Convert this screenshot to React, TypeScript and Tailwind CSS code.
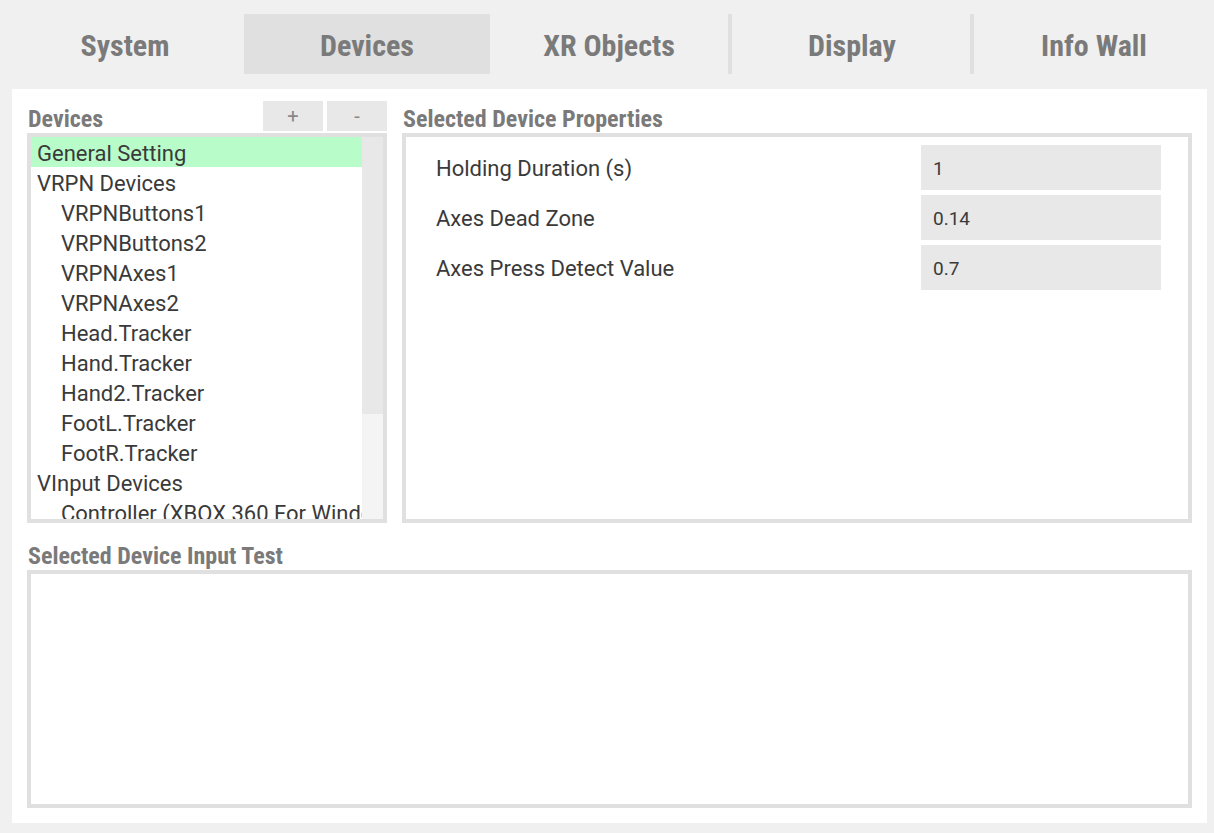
import React from "react";

const tabs = ["System", "Devices", "XR Objects", "Display", "Info Wall"];
const active = 1;

const items: { label: string; indent: boolean; selected?: boolean }[] = [
  { label: "General Setting", indent: false, selected: true },
  { label: "VRPN Devices", indent: false },
  { label: "VRPNButtons1", indent: true },
  { label: "VRPNButtons2", indent: true },
  { label: "VRPNAxes1", indent: true },
  { label: "VRPNAxes2", indent: true },
  { label: "Head.Tracker", indent: true },
  { label: "Hand.Tracker", indent: true },
  { label: "Hand2.Tracker", indent: true },
  { label: "FootL.Tracker", indent: true },
  { label: "FootR.Tracker", indent: true },
  { label: "VInput Devices", indent: false },
  { label: "Controller (XBOX 360 For Windows)", indent: true },
];

const props = [
  { label: "Holding Duration (s)", value: "1" },
  { label: "Axes Dead Zone", value: "0.14" },
  { label: "Axes Press Detect Value", value: "0.7" },
];

const narrow = "font-['Liberation_Sans_Narrow','Roboto_Condensed','Liberation_Sans',sans-serif]";

export default function App() {
  return (
    <div className="w-[1214px] h-[833px] bg-[#f0f0f0] font-['Roboto',sans-serif] overflow-hidden">
      {/* Tab bar */}
      <div className="pt-[14px] pl-[4px] grid grid-cols-5 h-[74px]">
        {tabs.map((t, i) => {
          const isActive = i === active;
          const sep = i > active + 1;
          return (
            <div
              key={t}
              className={
                "h-[60px] pt-[2px] flex items-center justify-center text-[30px] font-bold text-[#7a7a7a] " +
                narrow +
                " " +
                (isActive ? "bg-[#e0e0e0] mx-[-2px]" : "") +
                (sep ? " border-l-4 border-[#e0e0e0] ml-[-2px]" : "")
              }
            >
              {t}
            </div>
          );
        })}
      </div>

      {/* Panel */}
      <div className="mt-[15px] ml-[12px] w-[1195px] h-[734px] bg-white px-[15px] pt-[12px] pb-[15px] flex flex-col">
        <div className="flex gap-[15px]">
          {/* Left column */}
          <div className="w-[360px] flex flex-col">
            <div className="h-[30px] flex items-end justify-between">
              <div className={"text-[24px] leading-[24px] font-bold text-[#7a7a7a] pl-[1px] " + narrow}>Devices</div>
              <div className="flex gap-[4px] self-stretch">
                <div className="w-[60px] h-[30px] bg-[#e8e8e8] flex items-center justify-center text-[20px] text-[#888]">+</div>
                <div className="w-[60px] h-[30px] bg-[#e8e8e8] flex items-center justify-center text-[20px] text-[#888]">-</div>
              </div>
            </div>
            <div className="mt-[2px] h-[390px] border-4 border-[#e0e0e0] flex overflow-hidden">
              <div className="flex-1 overflow-hidden">
                {items.map((it) => (
                  <div
                    key={it.label}
                    className={
                      "h-[30px] pt-[3px] leading-[27px] text-[22px] text-[#3a3a3a] whitespace-nowrap overflow-hidden " +
                      (it.indent ? "pl-[30px] " : "pl-[6px] ") +
                      (it.selected ? "bg-[#b8fcc9]" : "")
                    }
                  >
                    {it.label}
                  </div>
                ))}
              </div>
              <div className="w-[21px] flex flex-col bg-[#f4f4f4]">
                <div className="h-[277px] bg-[#e8e8e8]" />
              </div>
            </div>
          </div>

          {/* Right column */}
          <div className="flex-1 flex flex-col">
            <div className="h-[30px] flex items-end">
              <div className={"text-[24px] leading-[24px] font-bold text-[#7a7a7a] pl-[1px] " + narrow}>
                Selected Device Properties
              </div>
            </div>
            <div className="mt-[2px] h-[390px] border-4 border-[#e0e0e0] pt-[8px] pl-[30px] pr-[27px] flex flex-col gap-[5px]">
              {props.map((p) => (
                <div key={p.label} className="flex items-center h-[45px]">
                  <div className="flex-1 pt-[2px] text-[22px] text-[#3a3a3a]">{p.label}</div>
                  <div className="w-[240px] h-[45px] pt-[3px] bg-[#e8e8e8] flex items-center pl-[12px] text-[19px] text-[#3a3a3a]">
                    {p.value}
                  </div>
                </div>
              ))}
            </div>
          </div>
        </div>

        {/* Bottom */}
        <div className="mt-[15px] h-[30px] flex items-end">
          <div className={"text-[24px] leading-[24px] font-bold text-[#7a7a7a] pl-[1px] " + narrow}>
            Selected Device Input Test
          </div>
        </div>
        <div className="mt-[2px] h-[238px] border-4 border-[#e0e0e0]" />
      </div>
    </div>
  );
}
